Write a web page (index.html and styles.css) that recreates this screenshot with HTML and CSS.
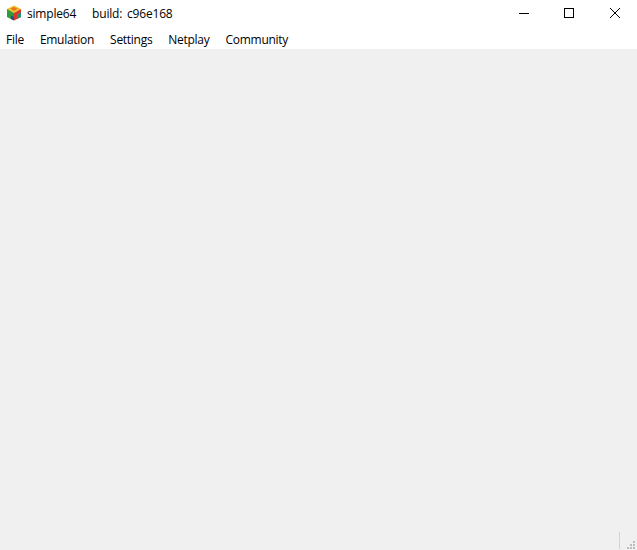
FILE: index.html
```html
<!DOCTYPE html>
<html lang="en">
<head>
<meta charset="utf-8">
<title>simple64 build: c96e168</title>
<link rel="stylesheet" href="styles.css">
</head>
<body>
<div class="window">
  <header class="titlebar">
    <svg class="app-icon" width="16" height="16" viewBox="0 0 16 16" aria-hidden="true">
      <polygon points="8,0.5 15,4 8,8 1,4" fill="#f0c020"/>
      <polygon points="8,2 11.5,3.8 8,5.8 4.5,3.8" fill="#e8702c"/>
      <polygon points="1,4 8,8 8,15.5 1,12" fill="#2f9a3c"/>
      <polygon points="8,8 15,4 15,12 8,15.5" fill="#d8382c"/>
      <polygon points="11,9.5 15,7.5 15,12 11,14" fill="#2a8f70"/>
      <polygon points="5,10.5 8,12 8,15.5 5,14" fill="#20508f"/>
    </svg>
    <span class="app-name">simple64</span>
    <span class="app-build">build: c96e168</span>
    <div class="controls">
      <button class="control" aria-label="Minimize">
        <svg width="10" height="10" viewBox="0 0 10 10"><path d="M0 5.5H10" stroke="#000" fill="none"/></svg>
      </button>
      <button class="control control-max" aria-label="Maximize">
        <svg width="10" height="10" viewBox="0 0 10 10"><rect x=".5" y=".5" width="9" height="9" stroke="#000" fill="none"/></svg>
      </button>
      <button class="control control-close" aria-label="Close">
        <svg width="10" height="10" viewBox="0 0 10 10"><path d="M0 0L10 10M10 0L0 10" stroke="#000" stroke-width="1" fill="none"/></svg>
      </button>
    </div>
  </header>
  <nav class="menubar">
    <span class="menu-item">File</span>
    <span class="menu-item">Emulation</span>
    <span class="menu-item">Settings</span>
    <span class="menu-item">Netplay</span>
    <span class="menu-item">Community</span>
  </nav>
  <main class="content"></main>
  <footer class="statusbar">
    <span class="status-sep"></span>
    <svg class="grip" width="8" height="8" viewBox="0 0 8 8" aria-hidden="true">
      <g fill="#bcbcbc">
        <rect x="6" y="0" width="2" height="2"/>
        <rect x="3" y="3" width="2" height="2"/>
        <rect x="6" y="3" width="2" height="2"/>
        <rect x="0" y="6" width="2" height="2"/>
        <rect x="3" y="6" width="2" height="2"/>
        <rect x="6" y="6" width="2" height="2"/>
      </g>
    </svg>
  </footer>
</div>
</body>
</html>
```
FILE: styles.css
```css
html, body {
  margin: 0;
  padding: 0;
  height: 100%;
  overflow: hidden;
}
body {
  font-family: "Open Sans", "Noto Sans", "Noto Sans CJK KR", sans-serif;
  font-size: 12px;
  letter-spacing: -0.2px;
  color: #000;
  background: #fff;
}
.window {
  display: flex;
  flex-direction: column;
  height: 550px;
}
.titlebar {
  display: flex;
  align-items: center;
  height: 26px;
  padding-left: 6px;
  background: #fff;
}
.app-icon {
  flex: none;
  margin-right: 5px;
}
.app-name {
  margin-right: 16px;
}
.app-build {
  word-spacing: 2px;
}
.controls {
  display: flex;
  margin-left: auto;
  align-self: flex-start;
}
.control {
  display: flex;
  align-items: center;
  justify-content: center;
  width: 46px;
  height: 26px;
  padding: 0;
  border: 0;
  background: none;
}
.control-max {
  padding-right: 2px;
}
.control-close {
  width: 44px;
}
.menubar {
  display: flex;
  align-items: center;
  gap: 16px;
  height: 23px;
  padding: 4px 0 0 6px;
  box-sizing: border-box;
  letter-spacing: -0.28px;
  background: #fff;
}
.content {
  flex: 1;
  background: #f0f0f0;
}
.statusbar {
  display: flex;
  justify-content: flex-end;
  align-items: flex-end;
  height: 18px;
  padding: 0 2px 1px 0;
  background: #f0f0f0;
}
.status-sep {
  width: 1px;
  height: 17px;
  margin-right: 7px;
  background: #d4d4d4;
}
.grip {
  display: block;
}
```
